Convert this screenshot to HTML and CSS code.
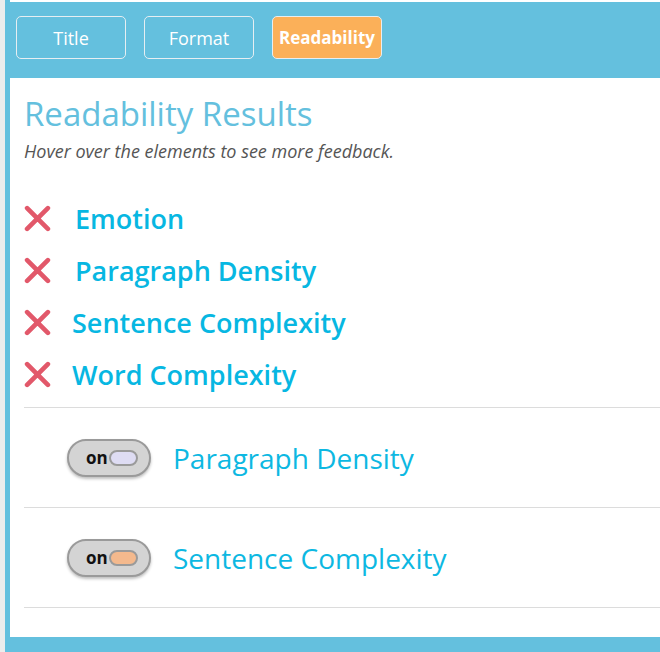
FILE: index.html
```html
<!DOCTYPE html>
<html lang="en">
<head>
  <meta charset="UTF-8" />
  <title>Readability</title>
  <link rel="stylesheet" href="styles.css">
</head>
<body>
  <div class="panel">
    <div class="tabs">
      <button class="tab">Title</button>
      <button class="tab">Format</button>
      <button class="tab active">Readability</button>
    </div>

    <div class="content">
      <h1>Readability Results</h1>
      <p class="hint">Hover over the elements to see more feedback.</p>

      <ul class="results">
        <li><svg class="cross" viewBox="0 0 26 26"><path d="M3 3 L23 23 M23 3 L3 23"/></svg><span>Emotion</span></li>
        <li><svg class="cross" viewBox="0 0 26 26"><path d="M3 3 L23 23 M23 3 L3 23"/></svg><span>Paragraph Density</span></li>
        <li><svg class="cross" viewBox="0 0 26 26"><path d="M3 3 L23 23 M23 3 L3 23"/></svg><span class="tight">Sentence Complexity</span></li>
        <li><svg class="cross" viewBox="0 0 26 26"><path d="M3 3 L23 23 M23 3 L3 23"/></svg><span class="tight">Word Complexity</span></li>
      </ul>

      <div class="toggle-row">
        <div class="toggle"><b>on</b><span class="knob lavender"></span></div>
        <span class="toggle-label">Paragraph Density</span>
      </div>
      <div class="toggle-row">
        <div class="toggle"><b>on</b><span class="knob peach"></span></div>
        <span class="toggle-label">Sentence Complexity</span>
      </div>
    </div>

    <div class="footer"></div>
  </div>
</body>
</html>
```

FILE: styles.css
```css
body {
  margin: 0;
  background: #ededed;
  font-family: 'Open Sans', sans-serif;
  overflow: hidden;
}
.panel {
  margin-left: 5px;
  border-left: 5px solid #64c0de;
  background: #fff;
  padding-top: 2px;
}
.tabs {
  background: #64c0de;
  height: 76px;
  padding: 14px 6px 0;
  box-sizing: border-box;
  display: flex;
  gap: 18px;
  align-items: flex-start;
}
.tab {
  width: 110px;
  height: 43px;
  border: 1px solid #e6eef2;
  border-radius: 5px;
  background: #64c0de;
  color: #fff;
  font-family: 'Open Sans', sans-serif;
  font-size: 18px;
  padding: 0;
}
.tab.active {
  background: #fbb059;
  font-weight: 700;
  font-size: 17px;
}
.content { padding: 14px 0 29px 14px; }
h1 {
  margin: 0;
  font-weight: 400;
  font-size: 33px;
  color: #64c0de;
  line-height: 44px;
}
.hint {
  margin: 3px 0 0;
  font-style: italic;
  font-size: 18px;
  color: #555;
  line-height: 24px;
}
.results {
  list-style: none;
  margin: 29px 0 0;
  padding: 0 0 7px;
  border-bottom: 1px solid #dcdcdc;
}
.results li {
  display: flex;
  align-items: center;
  height: 52px;
  font-size: 27px;
  font-weight: 600;
  color: #07b7e2;
}
.cross {
  width: 27px;
  height: 27px;
  margin-right: 24px;
  fill: none;
  stroke: #e2586a;
  stroke-width: 4.5;
  stroke-linecap: round;
}
.results .tight { margin-left: -3px; }
.toggle-row {
  display: flex;
  align-items: center;
  height: 99px;
  border-bottom: 1px solid #dcdcdc;
  padding-left: 43px;
}
.toggle {
  width: 84px;
  height: 38px;
  box-sizing: border-box;
  border: 2px solid #9a9a9a;
  border-radius: 19px;
  background: #d4d4d4;
  box-shadow: 0 2px 3px rgba(0, 0, 0, 0.25);
  display: flex;
  align-items: center;
  padding-left: 17px;
}
.toggle b {
  font-size: 17px;
  color: #111;
}
.knob {
  width: 29px;
  height: 16px;
  box-sizing: border-box;
  border: 2px solid #9a9a9a;
  border-radius: 8px;
  margin-left: 1px;
}
.knob.lavender { background: #dedcf3; }
.knob.peach { background: #f4b98d; }
.toggle-label {
  margin-left: 22px;
  font-size: 28px;
  color: #0db8e2;
}
.footer {
  background: #64c0de;
  height: 20px;
}
```
